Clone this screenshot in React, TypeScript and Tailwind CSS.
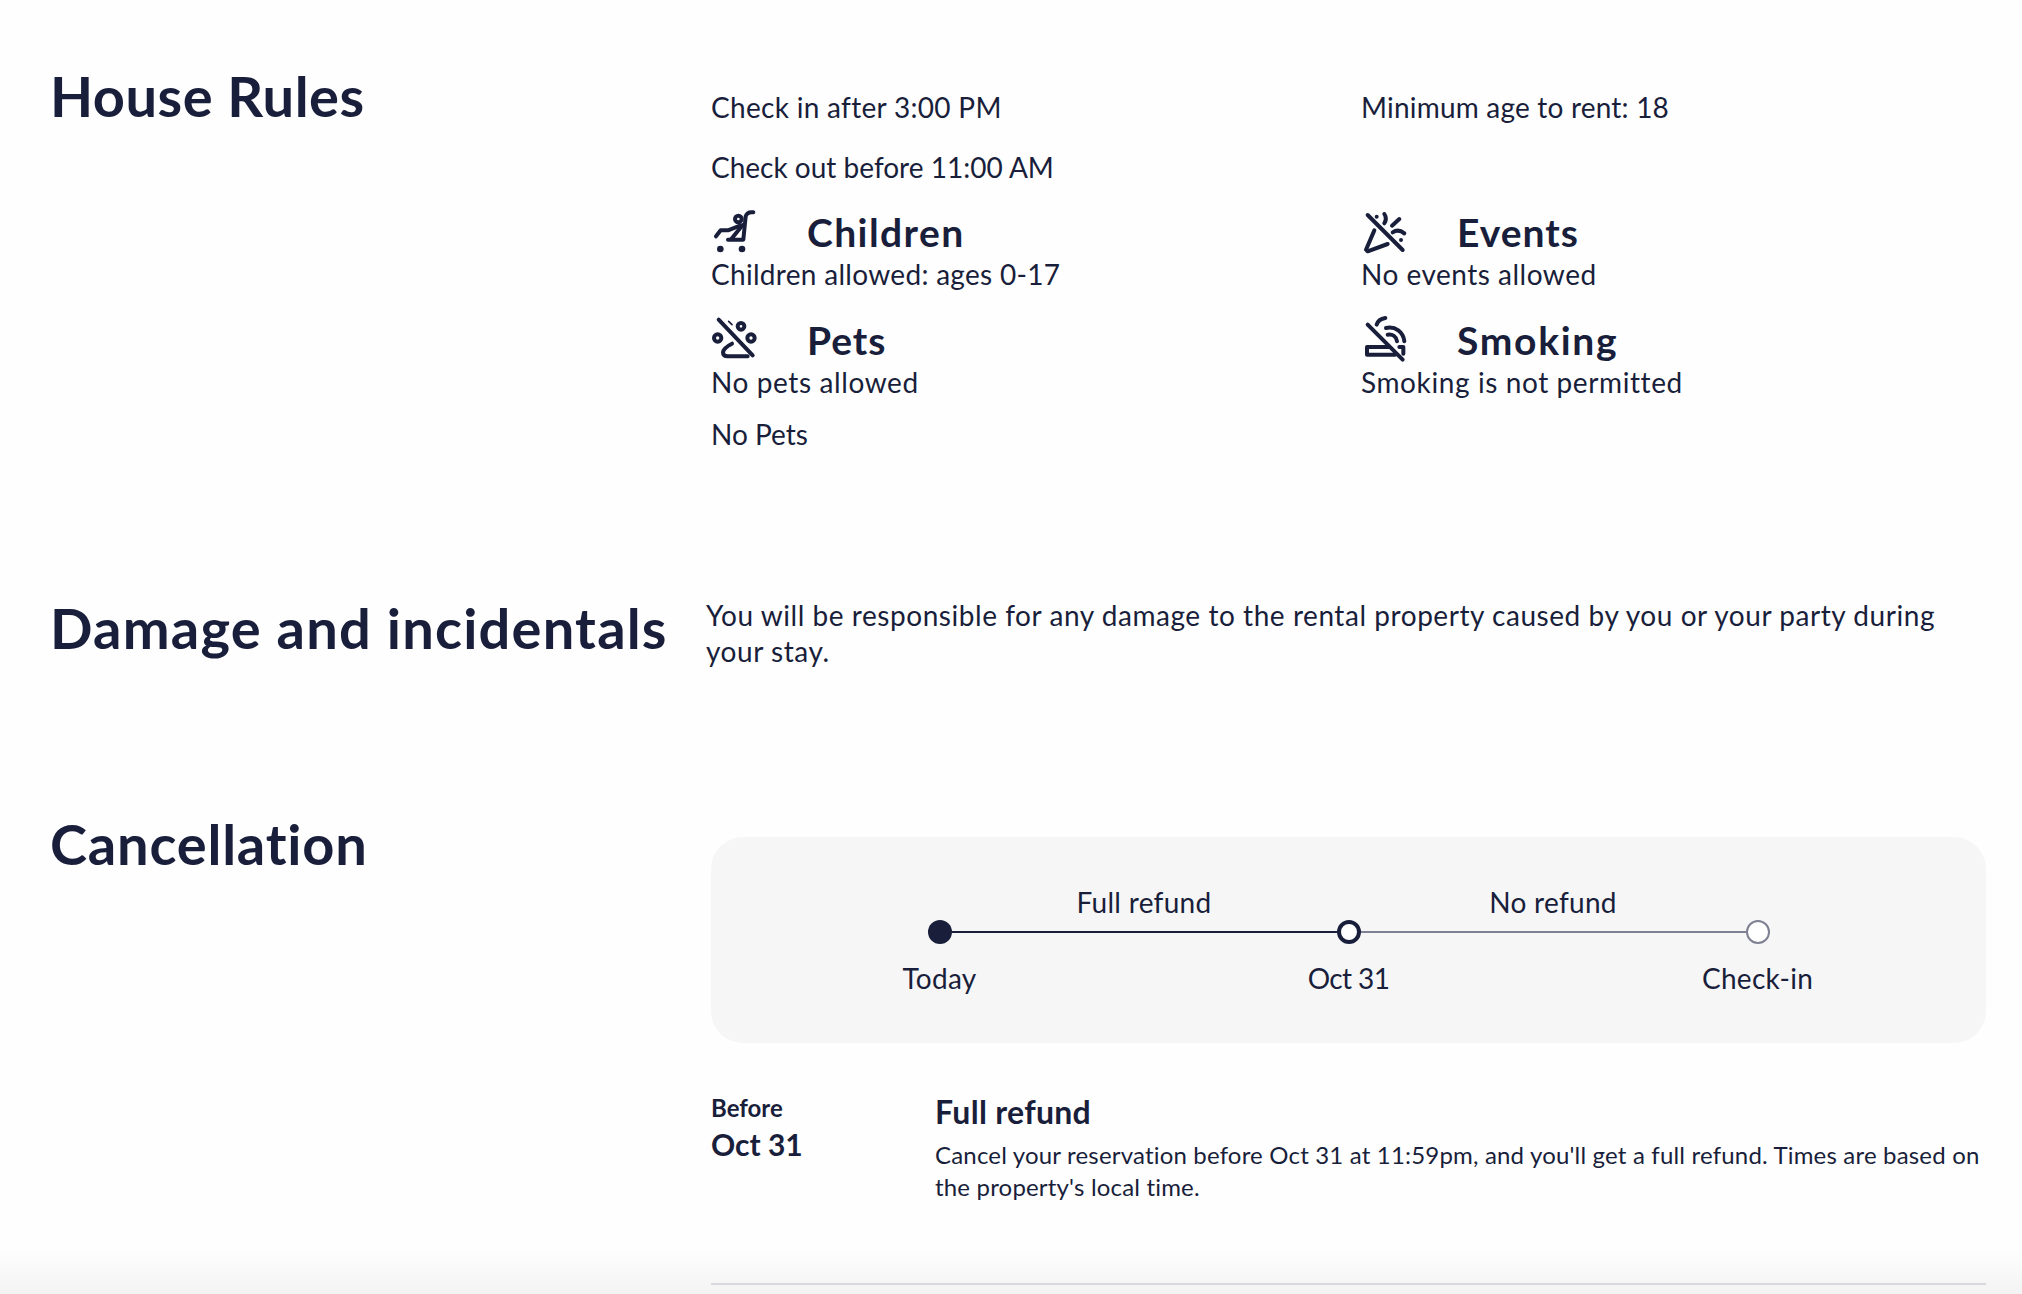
const iconProps = {
  viewBox: "15 0 165 165",
  className: "h-[55px] w-[55px]",
  fill: "none",
  stroke: "#191e3b",
  strokeWidth: 12,
  strokeLinecap: "round" as const,
  strokeLinejoin: "round" as const,
}

const StrollerIcon = () => (
  <svg {...iconProps}>
    <path d="M142 22c-14-2-20 2-23 12l-7 70H66" />
    <path d="M76 102l34-42" />
    <circle cx="97" cy="42" r="10" />
    <path d="M30 94l14-18h22l36-14" />
    <circle cx="43" cy="132" r="10" fill="#191e3b" stroke="none" />
    <circle cx="108" cy="132" r="10" fill="#191e3b" stroke="none" />
  </svg>
)

const PawIcon = () => (
  <svg {...iconProps}>
    <path d="M38 20l102 107" />
    <circle cx="35" cy="75" r="11" />
    <circle cx="105" cy="40" r="10" />
    <circle cx="135" cy="75" r="11" />
    <path d="M78 92c-12 6-26 14-27 26 0 8 6 12 14 12h60" />
    <path d="M68 25l10 10" strokeWidth="5" />
  </svg>
)

const PartyIcon = () => (
  <svg {...iconProps}>
    <path d="M35 30l105 105" />
    <path d="M55 76l-25 58 5 5 60-22" />
    <circle cx="62" cy="35" r="6" fill="#191e3b" stroke="none" />
    <path d="M85 27c6 9 6 18 0 28" />
    <path d="M130 42l-22 20" />
    <path d="M110 82c12-8 24-6 35 3" />
    <circle cx="135" cy="105" r="6" fill="#191e3b" stroke="none" />
  </svg>
)

const SmokingIcon = () => (
  <svg {...iconProps}>
    <path d="M35 35l105 105" />
    <path d="M98 102H33v23h84" />
    <path d="M130 102h12v20" />
    <path d="M62 35c3-10 12-18 26-20" />
    <path d="M90 45c28-6 52 12 55 40" />
    <path d="M95 65c14-2 26 6 28 20" />
  </svg>
)

const Rule = ({ icon, title, text, titleClass, textClass }: { icon: React.ReactNode; title: string; text: string; titleClass: string; textClass: string }) => (
  <div>
    <div className="flex h-[46px] items-center">
      <div className="w-[96px] shrink-0">{icon}</div>
      <h3 className={`text-[39px] font-bold leading-[46px] ${titleClass}`}>{title}</h3>
    </div>
    <p className={`mt-[1px] text-[28px] leading-[36px] ${textClass}`}>{text}</p>
  </div>
)

export default function App() {
  return (
    <div className="relative h-[1294px] overflow-hidden bg-[#fefefe] pl-[50px] pr-[36px] font-['Lato',sans-serif] text-[#191e3b]">
      {/* house rules */}
      <section className="flex pt-[59px]">
        <h2 className="w-[661px] shrink-0 text-[56px] font-bold leading-[74px] tracking-[0.5px]">House Rules</h2>
        <div className="flex-1 pt-[30px]">
          <div className="grid grid-cols-[650px_1fr]">
            <div className="flex flex-col gap-[24px]">
              <p className="text-[28px] leading-[36px] tracking-[0.3px]">Check in after 3:00 PM</p>
              <p className="text-[28px] leading-[36px]">Check out before 11:00 AM</p>
            </div>
            <p className="text-[28px] leading-[36px] tracking-[0.2px]">Minimum age to rent: 18</p>
          </div>
          <div className="mt-[24px] grid grid-cols-[650px_1fr] gap-y-[25px]">
            <Rule icon={<StrollerIcon />} title="Children" titleClass="tracking-[1.4px]" text="Children allowed: ages 0-17" textClass="tracking-[0.3px]" />
            <Rule icon={<PartyIcon />} title="Events" titleClass="tracking-[1px]" text="No events allowed" textClass="tracking-[0.5px]" />
            <Rule icon={<PawIcon />} title="Pets" titleClass="tracking-[1px]" text="No pets allowed" textClass="tracking-[0.6px]" />
            <Rule icon={<SmokingIcon />} title="Smoking" titleClass="tracking-[1.7px]" text="Smoking is not permitted" textClass="tracking-[0.6px]" />
          </div>
          <p className="mt-[16px] text-[28px] leading-[36px]">No Pets</p>
        </div>
      </section>

      {/* damage */}
      <section className="mt-[132px] flex">
        <h2 className="w-[656px] shrink-0 pt-[7px] text-[56px] font-bold leading-[74px] tracking-[1.2px]">Damage and incidentals</h2>
        <p className="flex-1 pt-[13px] text-[28px] leading-[36px] tracking-[0.55px]">
          You will be responsible for any damage to the rental property caused by you or your party during your stay.
        </p>
      </section>

      {/* cancellation */}
      <section className="mt-[138px] flex">
        <h2 className="w-[661px] shrink-0 text-[56px] font-bold leading-[74px] tracking-[0.8px]">Cancellation</h2>
        <div className="flex-1 pt-[30px]">
          <div className="flex h-[206px] flex-col items-center rounded-[32px] bg-[#f6f6f7] pt-[49px]">
            <div className="w-[842px]">
              <div className="flex px-[12px] text-[28px] leading-[32px] tracking-[0.3px]">
                <p className="flex-1 text-center">Full refund</p>
                <p className="flex-1 text-center">No refund</p>
              </div>
              <div className="mt-[2px] flex h-[24px] items-center">
                <span className="h-[24px] w-[24px] shrink-0 rounded-full bg-[#191e3b]" />
                <span className="h-[2px] flex-1 bg-[#191e3b]" />
                <span className="h-[24px] w-[24px] shrink-0 rounded-full border-[4px] border-[#191e3b] bg-white" />
                <span className="h-[2px] flex-1 bg-[#7f8192]" />
                <span className="h-[24px] w-[24px] shrink-0 rounded-full border-[2px] border-[#7f8192] bg-white" />
              </div>
              <div className="mt-[16px] flex justify-between px-[12px] text-[28px] leading-[36px] tracking-[0.3px]">
                <p className="flex w-0 justify-center whitespace-nowrap">Today</p>
                <p className="flex w-0 justify-center whitespace-nowrap tracking-[-0.6px]">Oct 31</p>
                <p className="flex w-0 justify-center whitespace-nowrap">Check-in</p>
              </div>
            </div>
          </div>
          <div className="mt-[49px] flex">
            <div className="w-[224px] shrink-0">
              <p className="text-[24px] font-bold leading-[32px]">Before</p>
              <p className="mt-[2px] text-[30px] font-bold leading-[36px]">Oct 31</p>
            </div>
            <div>
              <h3 className="text-[32px] font-bold leading-[40px] tracking-[0.3px]">Full refund</h3>
              <p className="mt-[7px] text-[24px] leading-[32px] tracking-[0.18px]">
                Cancel your reservation before Oct 31 at 11:59pm, and you'll get a full refund. Times are based on the property's local time.
              </p>
            </div>
          </div>
          <div className="relative z-10 mt-[80px] h-[2px] bg-[#d8d8de]" />
        </div>
      </section>

      <div className="pointer-events-none absolute inset-x-0 bottom-0 h-[44px] bg-gradient-to-b from-transparent to-[#f3f3f3]" />
    </div>
  )
}
